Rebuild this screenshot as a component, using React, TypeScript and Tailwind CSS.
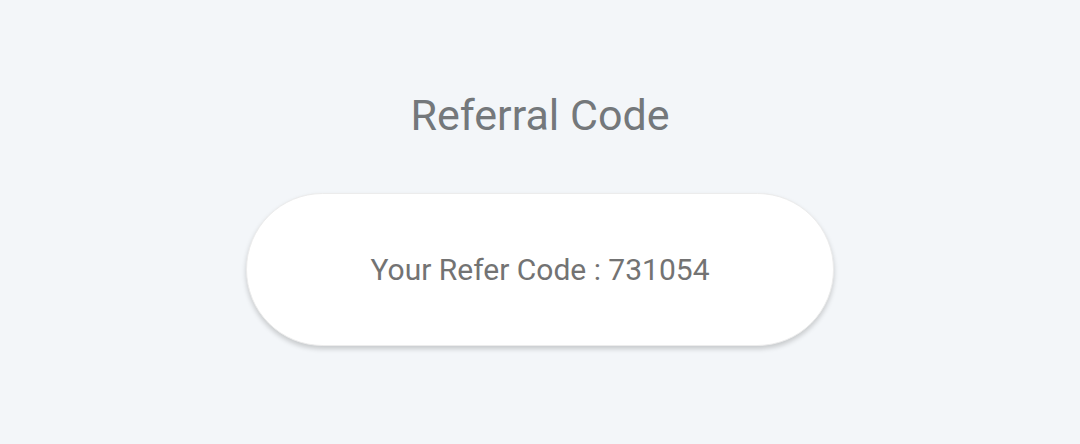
import React from 'react';

const App = () => {
  return (
    <div className="w-[1080px] h-[444px] bg-[#f3f6f9] flex flex-col items-center font-['Roboto',sans-serif]">
      <h1 className="mt-[90px] text-[43px] leading-[50px] text-[#74787b] font-normal">Referral Code</h1>
      <div className="mt-[53px] w-[588px] h-[153px] rounded-full bg-white border border-[#ececec] shadow-[0_3px_5px_rgba(0,0,0,0.18)] flex items-center justify-center">
        <span className="text-[30px] text-[#737373]">Your Refer Code : 731054</span>
      </div>
    </div>
  );
};

export default App;
